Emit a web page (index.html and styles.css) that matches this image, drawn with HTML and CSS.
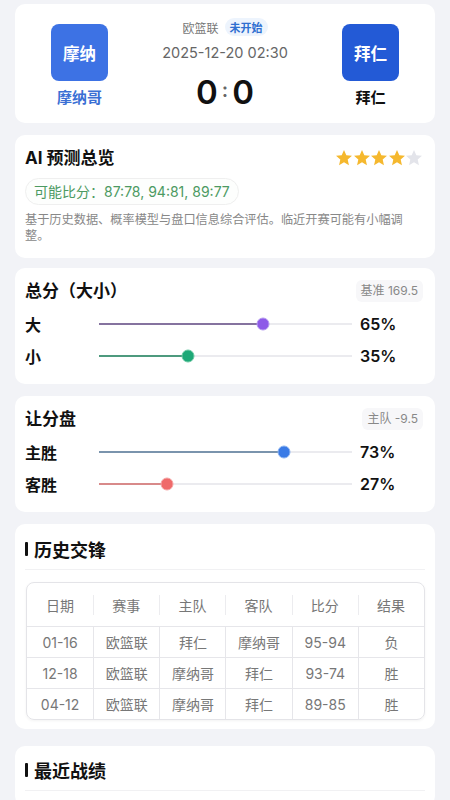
FILE: index.html
```html
<!DOCTYPE html>
<html lang="zh">
<head>
<meta charset="utf-8">
<title>比赛预测</title>
<link rel="stylesheet" href="styles.css">
</head>
<body>
<div class="page">
  <section class="card match">
    <div class="team">
      <div class="logo logo-home">摩纳</div>
      <div class="team-name home">摩纳哥</div>
    </div>
    <div class="center">
      <div class="meta"><span class="league">欧篮联</span><span class="status">未开始</span></div>
      <div class="date">2025-12-20 02:30</div>
      <div class="score"><span>0</span><span class="colon">:</span><span>0</span></div>
    </div>
    <div class="team">
      <div class="logo logo-away">拜仁</div>
      <div class="team-name">拜仁</div>
    </div>
  </section>

  <section class="card ai">
    <div class="head">
      <h2 class="title">AI 预测总览</h2>
      <div class="stars">
        <svg viewBox="2 2 20 19" class="star on"><polygon points="12,2 14.9,8.6 22,9.3 16.6,14 18.2,21 12,17.3 5.8,21 7.4,14 2,9.3 9.1,8.6"/></svg>
        <svg viewBox="2 2 20 19" class="star on"><polygon points="12,2 14.9,8.6 22,9.3 16.6,14 18.2,21 12,17.3 5.8,21 7.4,14 2,9.3 9.1,8.6"/></svg>
        <svg viewBox="2 2 20 19" class="star on"><polygon points="12,2 14.9,8.6 22,9.3 16.6,14 18.2,21 12,17.3 5.8,21 7.4,14 2,9.3 9.1,8.6"/></svg>
        <svg viewBox="2 2 20 19" class="star on"><polygon points="12,2 14.9,8.6 22,9.3 16.6,14 18.2,21 12,17.3 5.8,21 7.4,14 2,9.3 9.1,8.6"/></svg>
        <svg viewBox="2 2 20 19" class="star off"><polygon points="12,2 14.9,8.6 22,9.3 16.6,14 18.2,21 12,17.3 5.8,21 7.4,14 2,9.3 9.1,8.6"/></svg>
      </div>
    </div>
    <div class="pill">可能比分：87:78, 94:81, 89:77</div>
    <p class="desc">基于历史数据、概率模型与盘口信息综合评估。临近开赛可能有小幅调整。</p>
  </section>

  <section class="card odds total">
    <div class="head">
      <h2 class="title">总分（大小）</h2>
      <span class="tag">基准 169.5</span>
    </div>
    <div class="row">
      <span class="label">大</span>
      <div class="track purple"><div class="fill" style="width:65%"></div><span class="thumb" style="left:65%"></span></div>
      <span class="pct">65%</span>
    </div>
    <div class="row">
      <span class="label">小</span>
      <div class="track green"><div class="fill" style="width:35%"></div><span class="thumb" style="left:35%"></span></div>
      <span class="pct">35%</span>
    </div>
  </section>

  <section class="card odds">
    <div class="head">
      <h2 class="title">让分盘</h2>
      <span class="tag">主队 -9.5</span>
    </div>
    <div class="row">
      <span class="label">主胜</span>
      <div class="track blue"><div class="fill" style="width:73%"></div><span class="thumb" style="left:73%"></span></div>
      <span class="pct">73%</span>
    </div>
    <div class="row">
      <span class="label">客胜</span>
      <div class="track red"><div class="fill" style="width:27%"></div><span class="thumb" style="left:27%"></span></div>
      <span class="pct">27%</span>
    </div>
  </section>

  <section class="card history">
    <h2 class="sec-title">历史交锋</h2>
    <div class="table">
      <div class="thead">
        <span>日期</span><span>赛事</span><span>主队</span><span>客队</span><span>比分</span><span>结果</span>
      </div>
      <div class="tr"><span>01-16</span><span>欧篮联</span><span>拜仁</span><span>摩纳哥</span><span>95-94</span><span>负</span></div>
      <div class="tr"><span>12-18</span><span>欧篮联</span><span>摩纳哥</span><span>拜仁</span><span>93-74</span><span>胜</span></div>
      <div class="tr"><span>04-12</span><span>欧篮联</span><span>摩纳哥</span><span>拜仁</span><span>89-85</span><span>胜</span></div>
    </div>
  </section>

  <section class="card recent">
    <h2 class="sec-title">最近战绩</h2>
  </section>
</div>
</body>
</html>
```

FILE: styles.css
```css
* { box-sizing: border-box; }
html, body { margin: 0; padding: 0; }
body {
  background: #f2f3f7;
  font-family: "Inter", "Noto Sans CJK SC", sans-serif;
  color: #111;
  width: 450px;
  overflow: hidden;
}
.page {
  padding: 4px 15px 0;
  display: flex;
  flex-direction: column;
  gap: 12px;
}
.card {
  background: #fff;
  border-radius: 10px;
}
h2 { margin: 0; }

/* match header */
.match {
  height: 119px;
  display: flex;
  justify-content: space-between;
  align-items: flex-start;
  padding: 14px 36px 0;
}
.team {
  width: 57px;
  margin-top: 6px;
  display: flex;
  flex-direction: column;
  align-items: center;
}
.logo {
  width: 57px;
  height: 57px;
  border-radius: 8px;
  color: #fff;
  font-size: 16.5px;
  font-weight: 700;
  display: flex;
  align-items: center;
  justify-content: center;
  font-family: "Noto Sans CJK SC", sans-serif;
}
.logo-home { background: #3d72e4; }
.logo-away { background: #235ad6; }
.team-name {
  margin-top: 6px;
  font-size: 15px;
  line-height: 20px;
  font-weight: 700;
  white-space: nowrap;
  color: #111;
  font-family: "Noto Sans CJK SC", sans-serif;
}
.team-name.home { color: #3a6fd4; }
.center {
  display: flex;
  flex-direction: column;
  align-items: center;
}
.meta {
  height: 18px;
  display: flex;
  align-items: center;
  gap: 6px;
}
.league { font-size: 12px; color: #777; font-family: "Noto Sans CJK SC", sans-serif; }
.status {
  font-size: 11px;
  font-weight: 700;
  color: #2f6fd0;
  background: #edf4fd;
  border-radius: 9px;
  padding: 0 5px;
  height: 18px;
  line-height: 18px;
  font-family: "Noto Sans CJK SC", sans-serif;
}
.date {
  margin-top: 7px;
  font-size: 14.5px;
  line-height: 20px;
  color: #666;
}
.score {
  margin-top: 9px;
  font-size: 33px;
  line-height: 40px;
  font-weight: 600;
  color: #111;
  display: flex;
  align-items: center;
  gap: 4px;
}
.colon { font-size: 20px; color: #666; font-weight: 600; position: relative; top: -2px; }

/* AI */
.ai { padding: 12px 10px 12px; height: 123px; }
.head {
  display: flex;
  justify-content: space-between;
  align-items: center;
  height: 22px;
}
.title { font-size: 17px; font-weight: 700; line-height: 22px; font-family: "Inter", "Noto Sans CJK SC", sans-serif; }
.stars { display: flex; gap: 1.5px; margin-right: 3px; }
.star { width: 16px; height: 15.2px; }
.star.on { fill: #f5b82e; }
.star.off { fill: #e3e4ea; }
.pill {
  display: inline-block;
  margin-top: 9px;
  height: 27px;
  line-height: 25px;
  padding: 0 8px;
  border: 1px solid #efefef;
  border-radius: 14px;
  color: #4c9a62;
  font-size: 14px;
  background: #fdfefd;
}
.desc {
  margin: 6px 0 0;
  max-width: 386px;
  font-size: 12.2px;
  line-height: 16px;
  color: #888;
  font-family: "Noto Sans CJK SC", sans-serif;
}

/* odds */
.odds { padding: 12px 10px 0; height: 116px; }
.total { margin-top: -2px; }
.tag {
  font-size: 12px;
  color: #888;
  background: #f7f7f9;
  border-radius: 6px;
  padding: 0 5px;
  height: 22px;
  line-height: 22px;
  margin-right: 2px;
}
.row {
  display: flex;
  align-items: center;
  height: 32px;
}
.head + .row { margin-top: 6px; }
.label {
  width: 74px;
  font-size: 16px;
  font-weight: 600;
  font-family: "Noto Sans CJK SC", sans-serif;
}
.track {
  position: relative;
  flex: 1;
  height: 2px;
  background: #ebebef;
}
.fill { height: 2px; }
.thumb {
  position: absolute;
  top: 50%;
  width: 13px;
  height: 13px;
  border-radius: 50%;
  transform: translate(-50%, -50%);
}
.purple .fill { background: #85739f; }
.purple .thumb { background: #8e5ae8; border: 1.5px solid #b59af0; }
.green .fill { background: #4d9a7e; }
.green .thumb { background: #1ea877; border: 1.5px solid #6cc9a4; }
.blue .fill { background: #7a94ad; }
.blue .thumb { background: #3a7be6; border: 1.5px solid #8ab2f0; }
.red .fill { background: #d88a8a; }
.red .thumb { background: #ef6a6a; border: 1.5px solid #f5a5a5; }
.pct {
  width: 73px;
  padding-left: 8px;
  font-size: 16px;
  font-weight: 600;
  color: #111;
}

/* history */
.history { padding: 13px 10px 9px; }
.sec-title {
  font-size: 18px;
  font-weight: 700;
  line-height: 24px;
  padding-left: 9px;
  position: relative;
  padding-bottom: 8px;
  border-bottom: 1px solid #f1f1f3;
  font-family: "Noto Sans CJK SC", sans-serif;
}
.sec-title::before {
  content: "";
  position: absolute;
  left: 0;
  top: 5px;
  width: 3px;
  height: 14px;
  background: #111;
  border-radius: 1px;
}
.table {
  margin: 12px 0 0 1px;
  border: 1px solid #e4e4e8;
  border-radius: 8px;
  overflow: hidden;
  box-shadow: 0 1px 3px rgba(0,0,0,0.05);
}
.thead, .tr {
  display: grid;
  grid-template-columns: repeat(6, 1fr);
}
.thead { height: 43px; }
.thead span, .tr span {
  display: flex;
  align-items: center;
  justify-content: center;
  font-size: 14px;
  color: #777;
}
.thead span { position: relative; }
.thead span + span::before {
  content: "";
  position: absolute;
  left: 0;
  top: 12px;
  height: 20px;
  width: 1px;
  background: #ececef;
}
.tr { height: 31px; border-top: 1px solid #e6e6ea; }
.tr span + span { border-left: 1px solid #e6e6ea; }

.recent { margin-top: 5px; padding: 12px 10px 0; height: 60px; }
```
